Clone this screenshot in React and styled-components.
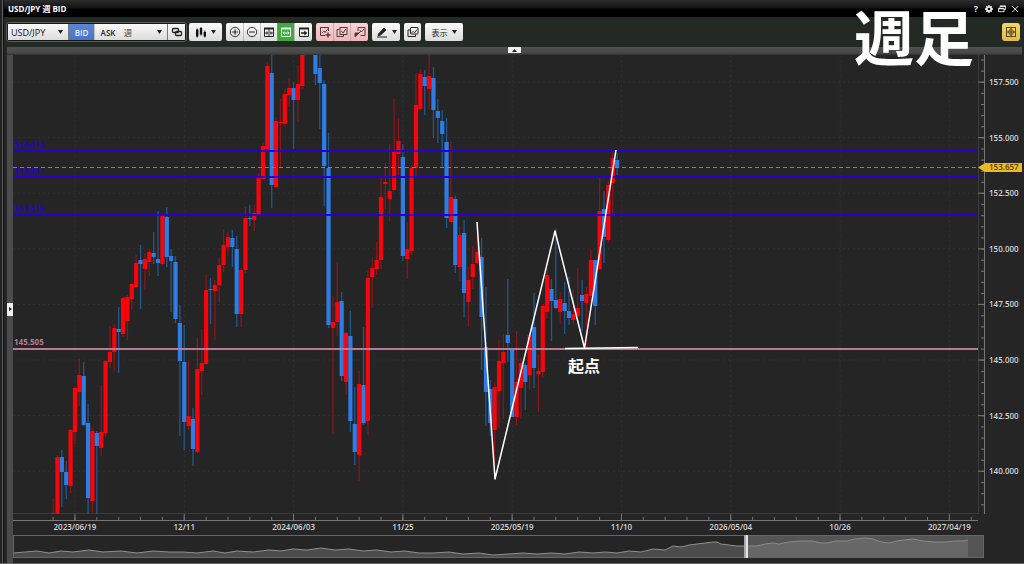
import React from "react";
import styled, { createGlobalStyle, css } from "styled-components";

const GlobalStyle = createGlobalStyle`
  * {
    box-sizing: border-box;
  }
  body {
    margin: 0;
    background: #252525;
    font-family: "Open Sans", "Noto Sans CJK JP", sans-serif;
  }
`;

const Window = styled.div`
  position: relative;
  display: flex;
  flex-direction: column;
  min-height: 100vh;
  padding-left: 4px;
  background: #252525;
  border-bottom: 1px solid #666;

  &::before {
    content: "";
    position: absolute;
    top: 0;
    bottom: 0;
    left: 0;
    width: 4px;
    background: linear-gradient(90deg, #222 0 2px, #5c5c5c 2px 3px, #111 3px);
  }
`;

const TitleBar = styled.header`
  display: flex;
  align-items: center;
  justify-content: space-between;
  height: 17px;
  padding: 0 4px;
  background: linear-gradient(#2c2c2c, #151515 45%, #000 55%);
`;

const Title = styled.h1`
  margin: 0;
  font-size: 8px;
  line-height: 16px;
  font-weight: 700;
  color: #fff;
`;

const WindowControls = styled.div`
  display: flex;
  gap: 3px;
`;

const ControlButton = styled.button`
  display: flex;
  align-items: center;
  justify-content: center;
  width: 10px;
  height: 14px;
  padding: 0;
  border: 0;
  background: none;
  color: #eee;
  font: 700 9px "Open Sans", sans-serif;
`;

const Toolbar = styled.div`
  display: flex;
  align-items: center;
  gap: 4px;
  height: 30px;
  padding: 0 4px 0 2px;
  background: #232a24;
`;

const MainTools = styled.div`
  display: flex;
  align-items: center;
  gap: 2px;
`;

const Group = styled.div`
  display: flex;
  height: 18px;
  border-radius: 2px;
  overflow: hidden;
`;

const PairGroup = styled.div`
  display: flex;
  height: 20px;
  padding: 1px;
  border: 1px solid #5a5d5a;
  border-radius: 3px;
  background: #151815;
`;

const tones = {
  plain: css`
    background: linear-gradient(#fafafa, #dcdcdc);
    color: #222;
  `,
  blue: css`
    background: linear-gradient(#5b86d6, #4674c6);
    color: #e4edff;
  `,
  green: css`
    background: #3fa83f;
    color: #eaffea;
  `,
  pink: css`
    background: linear-gradient(#f8d4d6, #f0b6ba);
    color: #54393b;
  `,
  yellow: css`
    background: linear-gradient(#f0d668, #e2b94a);
    color: #59451a;
  `,
};

const ToolButton = styled.button`
  display: flex;
  align-items: center;
  justify-content: center;
  gap: 4px;
  width: ${(p) => p.$width || 17}px;
  height: 100%;
  padding: 0;
  border: 0;
  font: ${(p) => p.$weight || 600} 8px "Open Sans", "Noto Sans CJK JP",
    sans-serif;
  ${(p) => tones[p.$tone || "plain"]}

  & + & {
    border-left: 1px solid #9a9a9a88;
  }
`;

const YellowButton = styled(ToolButton)`
  height: 18px;
  margin-left: auto;
  border-radius: 3px;
`;

const SelectHolder = styled.label`
  display: grid;
  align-items: center;
  width: ${(p) => p.$width}px;
  border-right: 1px solid #777;
  ${tones.plain}

  > * {
    grid-area: 1 / 1;
  }
  svg {
    justify-self: end;
    margin-right: 5px;
    pointer-events: none;
  }
`;

const Select = styled.select`
  appearance: none;
  width: 100%;
  height: 100%;
  padding: 0 0 0 3px;
  border: 0;
  background: none;
  color: ${(p) => (p.$size > 8 ? "#111" : "#444")};
  font: ${(p) => (p.$size > 8 ? 500 : 400)} ${(p) => p.$size}px "Open Sans",
    "Noto Sans CJK JP", sans-serif;
`;

const TopStrip = styled.div`
  display: flex;
  justify-content: center;
  height: 8px;
  margin: 0 2px 0 3px;
  background: linear-gradient(#505050, #484848 75%, #303030);
`;

const Body = styled.div`
  display: flex;
  flex: 1;
  margin-left: 3px;
`;

const SideStrip = styled.div`
  display: flex;
  align-items: center;
  width: 6px;
  background: #4b4b4b;
`;

const StripHandle = styled.button`
  display: flex;
  align-items: center;
  justify-content: center;
  width: ${(p) => (p.$vertical ? 6 : 13)}px;
  height: ${(p) => (p.$vertical ? 13 : 6)}px;
  padding: 0;
  border: 0;
  background: #eee;
  color: #222;
`;

const ChartArea = styled.main`
  flex: 1;
  min-width: 0;
`;

const Chart = styled.svg`
  display: block;
  width: 100%;
  height: auto;
  font: 600 8px "Open Sans", "Noto Sans CJK JP", sans-serif;
`;

const NavigatorHolder = styled.div`
  margin: 2px 40px 5px 0;

  svg {
    display: block;
    width: 100%;
    height: auto;
  }
`;

const Caption = styled.div`
  position: absolute;
  top: 0;
  right: 50px;
  font: 700 60px "Noto Sans CJK JP", sans-serif;
  line-height: 70px;
  color: #fff;
  pointer-events: none;
`;

// [up, high, body top, body bottom, low], one entry per week
const candles = [
  [1, 499, 513, 514, 514],
  [1, 455, 457, 514, 514],
  [0, 450, 457, 472, 507],
  [0, 461, 472, 485, 499],
  [1, 429, 430, 486, 493],
  [1, 386, 388, 432, 444],
  [1, 359, 375, 392, 406],
  [0, 362, 376, 425, 426],
  [0, 404, 423, 498, 514],
  [1, 428, 431, 501, 514],
  [0, 431, 433, 446, 514],
  [1, 385, 432, 448, 456],
  [1, 360, 361, 433, 437],
  [1, 326, 352, 362, 368],
  [1, 324, 328, 352, 371],
  [0, 307, 329, 332, 373],
  [1, 297, 298, 334, 337],
  [1, 295, 297, 321, 340],
  [1, 283, 284, 299, 309],
  [1, 255, 263, 287, 288],
  [0, 245, 260, 264, 309],
  [1, 253, 259, 269, 290],
  [1, 249, 252, 262, 276],
  [0, 232, 253, 257, 264],
  [0, 211, 259, 263, 276],
  [1, 214, 215, 264, 265],
  [0, 207, 217, 257, 267],
  [0, 249, 256, 261, 312],
  [0, 256, 262, 319, 323],
  [0, 305, 323, 361, 436],
  [0, 325, 362, 422, 450],
  [1, 361, 416, 426, 430],
  [0, 408, 419, 449, 466],
  [1, 338, 369, 452, 453],
  [1, 329, 363, 371, 395],
  [1, 275, 290, 364, 365],
  [0, 278, 289, 290, 324],
  [1, 280, 285, 291, 340],
  [1, 258, 265, 285, 302],
  [1, 229, 245, 265, 272],
  [1, 232, 237, 247, 256],
  [0, 230, 238, 247, 267],
  [0, 236, 249, 314, 327],
  [1, 268, 270, 314, 327],
  [1, 207, 218, 270, 273],
  [0, 205, 218, 219, 226],
  [1, 205, 213, 220, 231],
  [1, 173, 176, 214, 215],
  [1, 143, 146, 179, 180],
  [1, 62, 66, 149, 150],
  [0, 54, 73, 185, 208],
  [1, 117, 121, 187, 187],
  [1, 99, 122, 123, 167],
  [1, 89, 94, 124, 127],
  [1, 78, 88, 95, 107],
  [0, 82, 88, 100, 149],
  [1, 65, 84, 100, 122],
  [1, 54, 54, 86, 89],
  null,
  null,
  [0, 54, 54, 74, 85],
  [0, 54, 68, 83, 129],
  [0, 80, 84, 166, 206],
  [0, 133, 168, 325, 328],
  [1, 296, 322, 328, 434],
  [1, 262, 302, 322, 336],
  [0, 292, 301, 376, 381],
  [1, 332, 333, 382, 395],
  [0, 311, 336, 421, 432],
  [0, 387, 424, 452, 465],
  [1, 371, 384, 455, 481],
  [0, 327, 385, 423, 425],
  [1, 271, 278, 421, 435],
  [1, 259, 268, 277, 308],
  [1, 242, 260, 269, 275],
  [1, 178, 197, 260, 269],
  [1, 163, 182, 184, 209],
  [1, 144, 191, 199, 221],
  [1, 99, 150, 190, 191],
  [1, 118, 141, 154, 175],
  [0, 144, 157, 256, 261],
  [1, 222, 249, 259, 279],
  [1, 165, 168, 251, 255],
  [1, 73, 105, 168, 178],
  [1, 69, 74, 109, 110],
  [0, 70, 77, 86, 115],
  [1, 54, 76, 89, 110],
  [0, 67, 78, 110, 138],
  [0, 99, 111, 118, 143],
  [0, 110, 121, 134, 167],
  [0, 118, 142, 218, 228],
  [1, 142, 197, 222, 223],
  [0, 196, 199, 265, 273],
  [1, 227, 235, 267, 281],
  [0, 220, 233, 293, 317],
  [1, 267, 280, 302, 326],
  [1, 246, 264, 277, 289],
  [1, 232, 252, 263, 264],
  [0, 238, 257, 317, 370],
  [0, 287, 347, 392, 426],
  [0, 380, 389, 423, 436],
  [1, 382, 387, 430, 473],
  [1, 340, 361, 391, 428],
  [1, 334, 352, 363, 419],
  [0, 279, 335, 343, 362],
  [0, 349, 349, 417, 417],
  [1, 331, 382, 417, 425],
  [1, 358, 363, 388, 419],
  [0, 363, 365, 382, 410],
  [1, 333, 335, 375, 390],
  [0, 293, 327, 368, 388],
  [1, 355, 371, 374, 412],
  [1, 304, 306, 372, 378],
  [1, 268, 275, 312, 319],
  [0, 279, 289, 301, 341],
  [0, 229, 300, 308, 309],
  [1, 292, 299, 312, 324],
  [0, 282, 303, 311, 334],
  [0, 277, 311, 318, 325],
  [1, 290, 314, 320, 323],
  [1, 268, 308, 316, 317],
  [0, 280, 295, 301, 331],
  [1, 287, 294, 303, 347],
  [1, 250, 260, 296, 304],
  [0, 260, 260, 306, 325],
  [1, 177, 211, 269, 270],
  [0, 191, 209, 237, 263],
  [1, 181, 185, 240, 243],
  [1, 152, 158, 183, 214],
  [0, 153, 160, 168, 175],
];

const WEEK = 4.372;
const weekX = (i) => 53.1 + i * WEEK;

const prices = [157.5, 155, 152.5, 150, 147.5, 145, 142.5, 140];
const priceY = (price) => 82 + (157.5 - price) * 22.24;

const dates = [
  "2023/06/19",
  "12/11",
  "2024/06/03",
  "11/25",
  "2025/05/19",
  "11/10",
  "2026/05/04",
  "10/26",
  "2027/04/19",
];

const levels = [
  { price: "154.443", y: 151, color: "#2a00d0" },
  { price: "153.281", y: 177, color: "#2a00d0" },
  { price: "151.549", y: 215, color: "#2a00d0" },
  { price: "145.505", y: 349, color: "#b77b93" },
];

const history =
  "0,18 12,17 24,16 36,18 48,16 60,17 76,15 90,17 108,16 124,18 140,16 156,17 170,17 184,18 200,16 212,18 224,16 240,17 256,15 268,16 280,14 294,15 308,13 322,15 336,14 350,16 364,15 378,17 392,16 406,18 420,18 436,17 450,19 466,18 480,20 496,19 510,18 524,19 538,18 552,19 566,17 580,18 592,17 604,18 616,16 628,17 640,14 652,15 660,11 668,12 676,10 684,9 692,8 700,7 704,7 708,9 716,10 724,11 731,11";
const recent =
  "731,11 744,11 752,9 760,8 766,9 776,7 788,6 800,6 808,8 814,8 822,6 834,6 842,4 852,3 860,4 868,7 876,8 884,6 892,5 900,4 910,6 922,7 932,7 942,6 950,6 955,5";

function CandleSeries() {
  return (
    <g clipPath="url(#plot)">
      {candles.map((candle, i) => {
        if (!candle) return null;
        const [up, high, top, bottom, low] = candle;
        const x = weekX(i);
        return (
          <g key={i}>
            <path
              d={`M${x} ${high}V${low}`}
              stroke={up ? "#8c1518" : "#205891"}
              strokeWidth="1.3"
            />
            <rect
              x={x - 2.1}
              y={top}
              width="4.2"
              height={Math.max(bottom - top, 1)}
              fill={up ? "#f7040c" : "#2f7de4"}
            />
          </g>
        );
      })}
    </g>
  );
}

function Axes() {
  const minorPrices = Array.from({ length: 41 }, (_, i) => 60 + i * 11.12);
  const minorWeeks = Array.from({ length: 43 }, (_, i) => weekX(i * 5));
  return (
    <g>
      <g stroke="#303030" strokeDasharray="2 3">
        {prices.map((p) => (
          <path key={p} d={`M13 ${priceY(p)}H978`} />
        ))}
        {dates.map((d, i) => (
          <path key={d} d={`M${weekX(5 + i * 25)} 55V514`} />
        ))}
      </g>
      <path d="M978.5 55V514M13 513.5H978" stroke="#3a3a3a" />
      <path d="M984.5 55V514M13 520.5H978" stroke="#777" />
      <g stroke="#777">
        {minorPrices.map((y) => (
          <path key={y} d={`M981 ${y}H984`} />
        ))}
        {minorWeeks
          .filter((x) => x < 978)
          .map((x) => (
            <path key={x} d={`M${x} 517V520`} />
          ))}
        {prices.map((p) => (
          <path key={p} d={`M978 ${priceY(p)}H984`} />
        ))}
        {dates.map((d, i) => (
          <path key={d} d={`M${weekX(5 + i * 25)} 514V520`} />
        ))}
      </g>
      <g fill="#d6d6d6">
        {prices.map((p) => (
          <text key={p} x="989" y={priceY(p) + 3}>
            {p.toFixed(3)}
          </text>
        ))}
        {dates.map((d, i) => (
          <text key={d} x={weekX(5 + i * 25)} y="530" textAnchor="middle">
            {d}
          </text>
        ))}
      </g>
    </g>
  );
}

function PriceChart() {
  return (
    <Chart viewBox="13 55 1011 478" role="img" aria-label="USD/JPY">
      <clipPath id="plot">
        <rect x="13" y="55" width="965" height="459" />
      </clipPath>
      <Axes />
      <CandleSeries />
      {levels.map((level) => (
        <g key={level.price}>
          <path
            d={`M13 ${level.y}H978`}
            stroke={level.color}
            strokeWidth="2"
          />
          <text x="14" y={level.y - 4} fill={level.color} fontWeight="700">
            {level.price}
          </text>
        </g>
      ))}
      <path
        d="M13 167.5H978"
        stroke="#a5822c"
        strokeDasharray="4 3"
        fill="none"
      />
      <path d="M978 167.5L985 163H1022V172H985Z" fill="#edb923" />
      <text x="989" y="170" fill="#5a4200">
        153.657
      </text>
      <g fill="none" stroke="#fff" strokeLinejoin="round">
        <path d="M477 222L495 479L555 231L584.5 348L616 150" strokeWidth="1.5" />
        <path d="M565 348.5L638 347.5" strokeWidth="1.6" />
      </g>
      <text x="568" y="372" fill="#fff" fontSize="16" fontWeight="700">
        起点
      </text>
    </Chart>
  );
}

function Navigator() {
  return (
    <NavigatorHolder>
      <svg viewBox="0 0 971 23">
        <polygon points={`0,23 ${history} 731,23`} fill="#4c4c4c" />
        <polyline points={history} fill="none" stroke="#8f8f8f" />
        <rect x="735" width="236" height="23" fill="#555" />
        <polygon points={`731,23 ${recent} 955,23`} fill="#676767" />
        <polyline points={recent} fill="none" stroke="#8a8a8a" />
        <rect x="0.5" y="0.5" width="970" height="22" fill="none" stroke="#666" />
        <rect x="731" width="2" height="23" fill="#aaa" />
        <rect x="733" width="2" height="23" fill="#e4e4e4" />
      </svg>
    </NavigatorHolder>
  );
}

const Arrow = () => (
  <svg width="5" height="4" viewBox="0 0 5 4" aria-hidden="true">
    <path d="M0 0H5L2.5 4Z" fill="#222" />
  </svg>
);

const Icon = ({ children, size = 12 }) => (
  <svg
    width={size}
    height={size}
    viewBox="0 0 12 12"
    fill="none"
    stroke="currentColor"
    aria-hidden="true"
  >
    {children}
  </svg>
);

const LinkIcon = () => (
  <Icon>
    <rect x="1.5" y="2.5" width="6" height="4" rx="1" strokeWidth="1.3" />
    <rect x="4.5" y="5.5" width="6" height="4" rx="1" strokeWidth="1.3" />
  </Icon>
);

const CandleIcon = () => (
  <Icon>
    <path d="M2.2 3.5V10.5M6 2V8.5M9.8 6V10.5" strokeWidth="2.4" stroke="#111" />
    <path d="M2.2 2.5V11.5M6 1V9.5M9.8 4.5V11.5" strokeWidth="0.9" stroke="#111" />
  </Icon>
);

const ZoomIcon = ({ plus }) => (
  <Icon>
    <circle cx="6" cy="6" r="4.7" strokeWidth="0.9" />
    <path d={plus ? "M3.2 6H8.8M6 3.2V8.8" : "M3.2 6H8.8"} strokeWidth="1.1" />
  </Icon>
);

const PanelIcon = ({ children }) => (
  <Icon>
    <path d="M1.5 2V10.5H10.5V2" />
    <path d="M1 2.5H11" strokeWidth="2" />
    {children}
  </Icon>
);

const TrendIcon = () => <path d="M3.5 7L5 5.3L6.5 6.8L9 3.5" strokeWidth="0.9" />;

const AddChartIcon = () => (
  <Icon>
    <path d="M6 9.5H1.5V1.5H9.5V5" />
    <path d="M3 7L5 5L6 6.5L9 2.5" strokeWidth="0.9" />
    <path d="M9 6.5V11.5M6.5 9H11.5" strokeWidth="1.4" />
  </Icon>
);

const StackChartIcon = () => (
  <Icon>
    <path d="M3.5 3.5H1V10.5H7.5V8.5" />
    <rect x="4" y="1.5" width="7" height="7" />
    <path d="M5.5 5L7 7L10 3" strokeWidth="1" />
  </Icon>
);

const RemoveChartIcon = () => (
  <Icon>
    <path d="M4 5V1.5H11V9.5H6.5" />
    <path d="M5.5 4L7.5 6L10 3" strokeWidth="0.9" />
    <path d="M1 10.8V7H5Z M5 7L7 5" fill="currentColor" />
  </Icon>
);

const PenIcon = () => (
  <Icon>
    <path d="M2.5 8L8 2L10 4L4.5 9L2 9.5Z" fill="currentColor" />
    <path d="M1 11H11" />
  </Icon>
);

const CopyChartIcon = () => (
  <Icon>
    <rect x="3.5" y="1.5" width="7.5" height="6.5" rx="0.5" />
    <path d="M3 4H1V10.5H8.5V8.5" />
    <g transform="translate(1 0)">
      <TrendIcon />
    </g>
  </Icon>
);

const GridIcon = () => (
  <Icon>
    <rect x="1.5" y="1.5" width="9" height="9" />
    <path d="M6 1V11M1 6H11" strokeWidth="1.2" />
    <circle cx="6" cy="6" r="2.5" strokeWidth="0.8" />
  </Icon>
);

export default function App() {
  return (
    <Window>
      <GlobalStyle />
      <TitleBar>
        <Title>USD/JPY 週 BID</Title>
        <WindowControls>
          <ControlButton aria-label="Help">?</ControlButton>
          <ControlButton aria-label="Settings">
            <Icon size={8}>
              <circle cx="6" cy="6" r="3.3" strokeWidth="2.6" />
              <path
                d="M6 0V2M6 10V12M0 6H2M10 6H12M2 2L3 3M9 9L10 10M2 10L3 9M9 3L10 2"
                strokeWidth="2"
              />
            </Icon>
          </ControlButton>
          <ControlButton aria-label="Restore">
            <Icon size={8}>
              <path d="M3 4V2H11.5V7H9.5" strokeWidth="1.4" />
              <path d="M3 1.8H11.5M1 5.5H9" strokeWidth="2" />
              <rect x="1" y="5" width="8" height="5" strokeWidth="1.4" />
            </Icon>
          </ControlButton>
          <ControlButton aria-label="Close">
            <Icon size={8}>
              <path d="M2 2L10.5 10.5M10.5 2L2 10.5" strokeWidth="1.5" />
            </Icon>
          </ControlButton>
        </WindowControls>
      </TitleBar>

      <Toolbar>
        <MainTools>
          <PairGroup>
            <SelectHolder $width={61}>
              <Select $size={9} aria-label="Currency pair">
                <option>USD/JPY</option>
              </Select>
              <Arrow />
            </SelectHolder>
            <ToolButton $width={25} $tone="blue">
              BID
            </ToolButton>
            <ToolButton $width={27}>ASK</ToolButton>
            <SelectHolder $width={47}>
              <Select $size={8} aria-label="Period">
                <option>週</option>
              </Select>
              <Arrow />
            </SelectHolder>
            <ToolButton $width={17} aria-label="Link">
              <LinkIcon />
            </ToolButton>
          </PairGroup>
          <Group>
            <ToolButton $width={33} aria-label="Chart type">
              <CandleIcon />
              <Arrow />
            </ToolButton>
          </Group>
        </MainTools>
        <Group>
          <ToolButton aria-label="Zoom in">
            <ZoomIcon plus />
          </ToolButton>
          <ToolButton aria-label="Zoom out">
            <ZoomIcon />
          </ToolButton>
          <ToolButton aria-label="Narrow">
            <PanelIcon>
              <path d="M6 3V10M2 7H5M10 7H7M4 5.5V8.5M8 5.5V8.5" strokeWidth="0.9" />
            </PanelIcon>
          </ToolButton>
          <ToolButton $tone="green" aria-label="Fit">
            <PanelIcon>
              <path d="M3 7H9M4.5 5.5L3 7L4.5 8.5M7.5 5.5L9 7L7.5 8.5" />
            </PanelIcon>
          </ToolButton>
          <ToolButton $width={18} aria-label="Latest">
            <PanelIcon>
              <path d="M3 7H8" strokeWidth="1.6" />
              <path d="M6.5 5L9 7L6.5 9Z" fill="currentColor" strokeWidth="0.5" />
            </PanelIcon>
          </ToolButton>
        </Group>
        <Group>
          <ToolButton $tone="pink" aria-label="Add indicator">
            <AddChartIcon />
          </ToolButton>
          <ToolButton $tone="pink" aria-label="Indicator list">
            <StackChartIcon />
          </ToolButton>
          <ToolButton $width={18} $tone="pink" aria-label="Clear indicators">
            <RemoveChartIcon />
          </ToolButton>
        </Group>
        <Group>
          <ToolButton $width={28} aria-label="Draw">
            <PenIcon />
            <Arrow />
          </ToolButton>
        </Group>
        <Group>
          <ToolButton aria-label="Duplicate">
            <CopyChartIcon />
          </ToolButton>
        </Group>
        <Group>
          <ToolButton $width={38} $weight={400}>
            表示
            <Arrow />
          </ToolButton>
        </Group>
        <YellowButton $width={18} $tone="yellow" aria-label="Layout">
          <GridIcon />
        </YellowButton>
      </Toolbar>

      <TopStrip>
        <StripHandle aria-label="Collapse toolbar">
          <svg width="5" height="3" viewBox="0 0 5 3">
            <path d="M0 3H5L2.5 0Z" fill="#222" />
          </svg>
        </StripHandle>
      </TopStrip>

      <Body>
        <SideStrip>
          <StripHandle $vertical aria-label="Open side panel">
            <svg width="3" height="4" viewBox="0 0 3 4">
              <path d="M0 0V4L3 2Z" fill="#222" />
            </svg>
          </StripHandle>
        </SideStrip>
        <ChartArea>
          <PriceChart />
          <Navigator />
        </ChartArea>
      </Body>
      <Caption>週足</Caption>
    </Window>
  );
}
